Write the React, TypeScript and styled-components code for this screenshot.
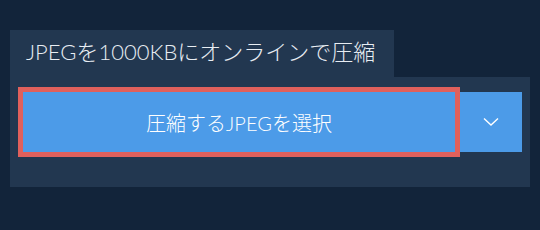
import React from "react";
import styled, { createGlobalStyle } from "styled-components";

const Global = createGlobalStyle`
  html, body { margin: 0; padding: 0; background: #12243a; }
  body { font-family: Lato, "Noto Sans CJK JP", sans-serif; }
`;

const Page = styled.div`
  width: 540px;
  height: 230px;
  padding: 30px 10px 0 10px;
  box-sizing: border-box;
  background: #12243a;
`;

const Tab = styled.div`
  display: inline-flex;
  align-items: center;
  height: 47px;
  padding: 0 16px 8px 16px;
  width: 384px;
  box-sizing: border-box;
  background: #223750;
  color: #e8edf3;
  font-size: 22px;
  font-weight: 300;
  white-space: nowrap;
`;

const Panel = styled.div`
  background: #223750;
  padding: 10px 8px 30px 8px;
  display: flex;
  align-items: center;
`;

const MainButton = styled.button`
  flex: 1;
  height: 70px;
  border: 5px solid #e0605c;
  background: #4c9be8;
  color: #ffffff;
  font-family: Lato, "Noto Sans CJK JP", sans-serif;
  font-size: 20px;
  font-weight: 300;
  padding: 0;
  margin: 0;
  box-sizing: border-box;
  display: flex;
  align-items: center;
  justify-content: center;
`;

const DropButton = styled.button`
  width: 62px;
  height: 60px;
  border: none;
  background: #4c9be8;
  padding: 0;
  margin: 0;
  display: flex;
  align-items: center;
  justify-content: center;
`;

export default function App() {
  return (
    <>
      <Global />
      <Page>
        <Tab>JPEGを1000KBにオンラインで圧縮</Tab>
        <Panel>
          <MainButton>圧縮するJPEGを選択</MainButton>
          <DropButton aria-label="more">
            <svg width="16" height="10" viewBox="0 0 16 10">
              <path d="M1 1.5 L8 8 L15 1.5" fill="none" stroke="#ffffff" strokeWidth="1.4" />
            </svg>
          </DropButton>
        </Panel>
      </Page>
    </>
  );
}
